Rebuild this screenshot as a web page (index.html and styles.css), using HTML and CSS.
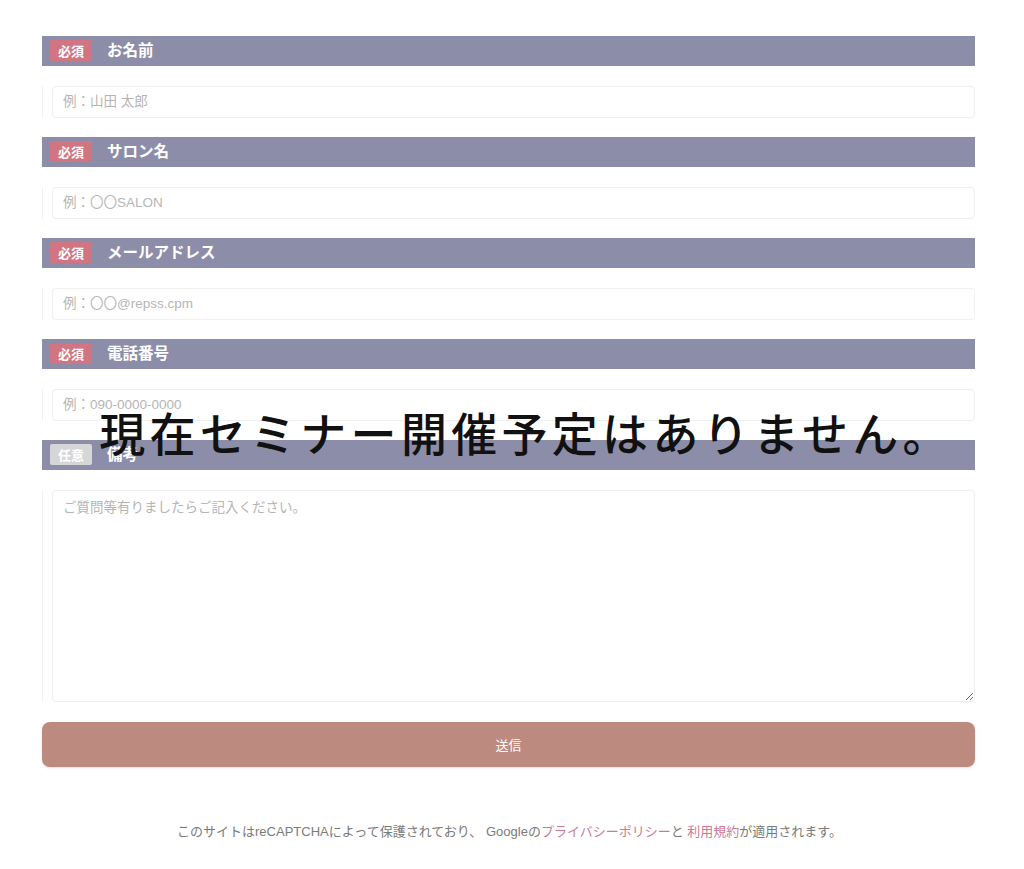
FILE: index.html
```html
<!DOCTYPE html>
<html lang="ja">
<head>
<meta charset="utf-8">
<link rel="stylesheet" href="styles.css">
</head>
<body>
<div class="page">
  <form class="form">
    <div class="field">
      <div class="head"><span class="badge req">必須</span><span class="label">お名前</span></div>
      <div class="inwrap"><input class="input" placeholder="例：山田 太郎"></div>
    </div>
    <div class="field">
      <div class="head"><span class="badge req">必須</span><span class="label">サロン名</span></div>
      <div class="inwrap"><input class="input" placeholder="例：〇〇SALON"></div>
    </div>
    <div class="field">
      <div class="head"><span class="badge req">必須</span><span class="label">メールアドレス</span></div>
      <div class="inwrap"><input class="input" placeholder="例：〇〇@repss.cpm"></div>
    </div>
    <div class="field">
      <div class="head"><span class="badge req">必須</span><span class="label">電話番号</span></div>
      <div class="inwrap"><input class="input" placeholder="例：090-0000-0000"></div>
    </div>
    <div class="field">
      <div class="head"><span class="badge opt">任意</span><span class="label">備考</span></div>
      <div class="inwrap"><textarea class="textarea" placeholder="ご質問等有りましたらご記入ください。"></textarea></div>
    </div>
    <button type="button" class="submit">送信</button>
  </form>
  <p class="note">このサイトはreCAPTCHAによって保護されており、 Googleの<a href="#">プライバシーポリシー</a>と <a href="#">利用規約</a>が適用されます。</p>
  <div class="overlay">現在セミナー開催予定はありません。</div>
</div>
</body>
</html>
```
FILE: styles.css
```css
* { box-sizing: border-box; }
html, body { margin: 0; padding: 0; background: #fff; }
body { font-family: "Liberation Sans", "Noto Sans CJK JP", sans-serif; }
.page { position: relative; width: 1024px; height: 869px; padding: 36px 49px 0 42px; }
.form { display: flex; flex-direction: column; }
.field { display: flex; flex-direction: column; gap: 20px; margin-bottom: 19px; }
.head { height: 30px; background: #8c8da9; display: flex; align-items: center; padding-left: 8px; padding-bottom: 2px; }
.badge { display: inline-flex; align-items: center; justify-content: center; width: 42px; height: 21px; font-family: "Noto Sans CJK JP", sans-serif; font-size: 13px; font-weight: 700; color: #fff; border-radius: 2px; line-height: 1; }
.badge.req { background: #d17582; }
.badge.opt { background: #d6d6d8; }
.label { margin-left: 15px; color: #fff; font-family: "Noto Sans CJK JP", sans-serif; font-size: 15.5px; font-weight: 700; line-height: 1; }
.inwrap { border-left: 1px solid #f2f2f2; padding-left: 9px; }
.input, .textarea { display: block; width: 100%; border: 1px solid #efefef; border-radius: 4px; background: #fff; font-family: "Liberation Sans", "Noto Sans CJK JP", sans-serif; font-size: 13.5px; color: #333; padding: 0 10px 2px; outline: none; }
.input { height: 32px; }
.textarea { height: 212px; padding-top: 5px; resize: vertical; }
.input::placeholder, .textarea::placeholder { color: #b5b5b5; }
.field:last-of-type { margin-bottom: 20px; }
.submit { height: 45px; width: 100%; border: none; border-radius: 8px; background: #bd8a80; color: #fff; font-family: "Noto Sans CJK JP", sans-serif; font-size: 13px; box-shadow: 0 1px 2px rgba(190,140,130,0.3); padding-bottom: 2px; }
.note { margin: 54px 0 0; text-align: center; font-size: 13px; color: #7a7a7a; padding-left: 2px; }
.note a { color: #c97b95; text-decoration: none; }
.overlay { position: absolute; left: 0; right: 0; top: 400px; text-align: center; font-family: "Noto Sans CJK JP", sans-serif; font-size: 46px; font-weight: 500; color: #111; line-height: 62px; letter-spacing: 4.3px; padding-left: 28px; }
```
